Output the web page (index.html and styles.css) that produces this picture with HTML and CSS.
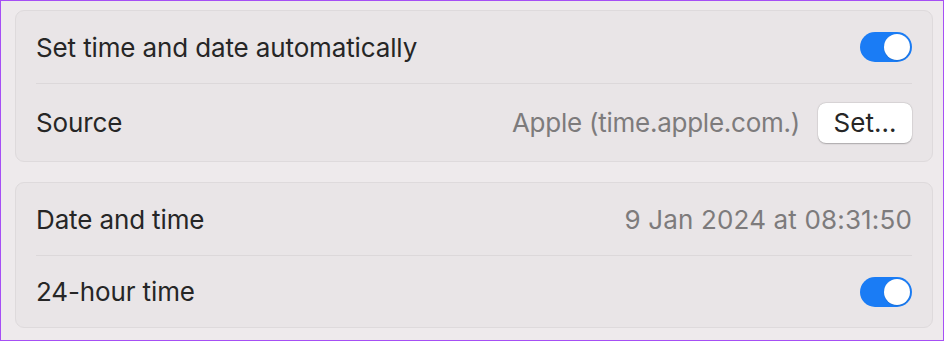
FILE: index.html
```html
<!DOCTYPE html>
<html lang="en">
<head>
<meta charset="utf-8">
<title>Date &amp; Time</title>
<link rel="stylesheet" href="styles.css">
</head>
<body>
<div class="frame">
  <section class="card">
    <div class="row">
      <span class="label">Set time and date automatically</span>
      <span class="toggle on"><span class="knob"></span></span>
    </div>
    <div class="divider"></div>
    <div class="row row-tall">
      <span class="label">Source</span>
      <div class="right">
        <span class="value">Apple (time.apple.com.)</span>
        <button class="btn">Set…</button>
      </div>
    </div>
  </section>
  <section class="card">
    <div class="row">
      <span class="label">Date and time</span>
      <span class="value value-num">9 Jan 2024 at 08:31:50</span>
    </div>
    <div class="divider"></div>
    <div class="row row-last">
      <span class="label">24-hour time</span>
      <span class="toggle on"><span class="knob"></span></span>
    </div>
  </section>
</div>
</body>
</html>
```
FILE: styles.css
```css
* { box-sizing: border-box; }
html, body { margin: 0; padding: 0; }
body {
  font-family: Inter, "Noto Sans", sans-serif;
  background: #eeeaec;
}
.frame {
  width: 944px;
  height: 341px;
  border: 1px solid #a64ff5;
  background: #eeeaec;
  padding: 9px 10px 0 14px;
  display: flex;
  flex-direction: column;
  gap: 20px;
}
.card {
  background: #e9e5e7;
  border: 1px solid #dedadc;
  border-radius: 9px;
  padding: 0 20px;
}
.row {
  height: 72px;
  display: flex;
  align-items: center;
  justify-content: space-between;
}
.row-tall { height: 77px; }
.row-last { height: 71px; }
.divider {
  height: 1px;
  background: #dcd8da;
}
.label {
  font-size: 26px;
  color: #262626;
  letter-spacing: -0.13px;
}
.value {
  font-size: 26px;
  color: #7d7b7c;
  letter-spacing: -0.25px;
}
.value-num {
  letter-spacing: 0.15px;
}
.right {
  display: flex;
  align-items: center;
  gap: 18px;
}
.btn {
  font-family: inherit;
  font-size: 26px;
  color: #262626;
  background: #ffffff;
  border: none;
  border-radius: 8px;
  width: 94px;
  height: 40px;
  padding: 0;
  box-shadow: 0 0.5px 1.5px rgba(0,0,0,0.25), 0 0 0 0.5px rgba(0,0,0,0.06);
}
.toggle {
  width: 52px;
  height: 30px;
  border-radius: 15px;
  background: #1a7cf5;
  display: flex;
  align-items: center;
  justify-content: flex-end;
  padding: 0 2px;
}
.knob {
  width: 26px;
  height: 26px;
  border-radius: 50%;
  background: #ffffff;
  box-shadow: 0 0.5px 1px rgba(0,0,0,0.2);
}
```
